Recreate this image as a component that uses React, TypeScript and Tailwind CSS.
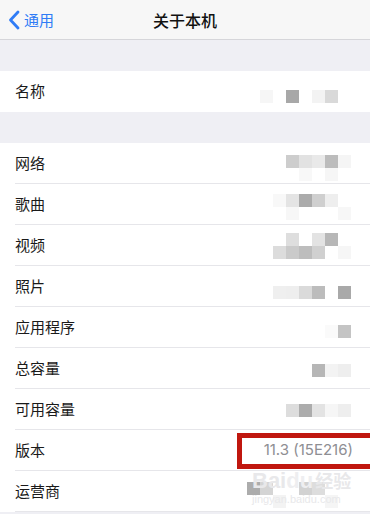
import React from "react";

type Block = { x: number; y: number; c: string };

// mosaic blur blocks over personal values (x relative to page, y relative to row top)
const rows: { label: string; blocks: Block[] }[] = [
  {
    label: "网络",
    blocks: [
      { x: 286, y: 12, c: "#cdcdcd" },
      { x: 299, y: 12, c: "#e2e2e2" },
      { x: 312, y: 12, c: "#e9e9e9" },
      { x: 325, y: 12, c: "#bcbcbc" },
      { x: 338, y: 12, c: "#f5f5f5" },
      { x: 299, y: 25, c: "#f8f8f8" },
      { x: 325, y: 25, c: "#f6f6f6" },
    ],
  },
  {
    label: "歌曲",
    blocks: [
      { x: 273, y: 10, c: "#f8f8f8" },
      { x: 286, y: 10, c: "#e4e4e4" },
      { x: 299, y: 10, c: "#ababab" },
      { x: 312, y: 10, c: "#cfcfcf" },
      { x: 325, y: 10, c: "#eeeeee" },
      { x: 286, y: 23, c: "#f7f7f7" },
      { x: 338, y: 23, c: "#f7f7f7" },
    ],
  },
  {
    label: "视频",
    blocks: [
      { x: 286, y: 8, c: "#dedede" },
      { x: 312, y: 8, c: "#e3e3e3" },
      { x: 325, y: 8, c: "#b7b7b7" },
      { x: 273, y: 21, c: "#dcdcdc" },
      { x: 286, y: 21, c: "#cacaca" },
      { x: 299, y: 21, c: "#bdbdbd" },
      { x: 312, y: 21, c: "#d0d0d0" },
      { x: 338, y: 21, c: "#f6f6f6" },
    ],
  },
  {
    label: "照片",
    blocks: [
      { x: 273, y: 20, c: "#efefef" },
      { x: 286, y: 20, c: "#eeeeee" },
      { x: 299, y: 20, c: "#dadada" },
      { x: 312, y: 20, c: "#bcbcbc" },
      { x: 338, y: 20, c: "#a9a9a9" },
    ],
  },
  {
    label: "应用程序",
    blocks: [
      { x: 325, y: 18, c: "#fafafa" },
      { x: 338, y: 18, c: "#c4c4c4" },
    ],
  },
  {
    label: "总容量",
    blocks: [
      { x: 312, y: 16, c: "#b6b6b6" },
      { x: 325, y: 16, c: "#f3f3f3" },
      { x: 338, y: 16, c: "#eeeeee" },
    ],
  },
  {
    label: "可用容量",
    blocks: [
      { x: 286, y: 15, c: "#dddddd" },
      { x: 299, y: 15, c: "#acacac" },
      { x: 312, y: 15, c: "#e3e3e3" },
      { x: 325, y: 15, c: "#f6f6f6" },
      { x: 338, y: 15, c: "#eeeeee" },
    ],
  },
  { label: "版本", blocks: [] },
  {
    label: "运营商",
    blocks: [
      { x: 247, y: 11, c: "#acacac" },
      { x: 260, y: 11, c: "#d4d4d4" },
      { x: 299, y: 11, c: "#d2d2d2" },
      { x: 312, y: 11, c: "#dddddd" },
      { x: 273, y: 24, c: "#f3f3f3" },
      { x: 325, y: 24, c: "#f5f5f5" },
    ],
  },
];

const nameBlocks: Block[] = [
  { x: 260, y: 19, c: "#f6f6f6" },
  { x: 286, y: 19, c: "#a8a8a8" },
  { x: 312, y: 19, c: "#f3f3f3" },
  { x: 325, y: 19, c: "#d9d9d9" },
];

const font = { fontFamily: '"Noto Sans CJK SC", "Noto Sans", sans-serif' };

function Mosaic({ blocks }: { blocks: Block[] }) {
  return (
    <>
      {blocks.map((b, i) => (
        <span
          key={i}
          className="absolute h-[13px] w-[13px]"
          style={{ left: b.x, top: b.y, background: b.c }}
        />
      ))}
    </>
  );
}

export default function App() {
  return (
    <div className="relative h-[514px] w-[370px] overflow-hidden bg-[#efeff4]" style={font}>
      {/* nav bar */}
      <div className="relative flex h-[40px] items-center border-b border-[#d6d6da] bg-[#f7f7f7]">
        <div className="flex items-center pl-[8px] text-[#2f7cf6]">
          <svg width="12" height="20" viewBox="0 0 12 20" fill="none">
            <path d="M10 2 L2.5 10 L10 18" stroke="currentColor" strokeWidth="2.8" strokeLinecap="round" strokeLinejoin="round" />
          </svg>
          <span className="ml-[4px] text-[15px] leading-none">通用</span>
        </div>
        <span className="absolute left-0 right-0 text-center text-[16px] font-medium leading-none text-[#111]">
          关于本机
        </span>
      </div>

      <div className="h-[31px]" />

      {/* name group */}
      <div className="relative flex h-[41px] items-center bg-white pl-[15px] text-[15px] text-[#1a1a1a]">
        名称
        <Mosaic blocks={nameBlocks} />
      </div>

      <div className="h-[31px]" />

      {/* info group */}
      <div className="bg-white">
        {rows.map((r) => (
          <div key={r.label} className="relative h-[41px] pl-[15px]">
            <div className="flex h-[40px] items-center justify-between pr-[17px] text-[15px] text-[#1a1a1a]">
              <span>{r.label}</span>
              {r.label === "版本" && (
                <span className="text-[15px] text-[#8e8e93]" style={{ fontFamily: "Inter, sans-serif" }}>
                  11.3 (15E216)
                </span>
              )}
            </div>
            <div className="h-px bg-[#e6e6ea]" />
            <Mosaic blocks={r.blocks} />
          </div>
        ))}
      </div>

      {/* red highlight box */}
      <div className="absolute left-[237px] top-[433px] h-[36px] w-[140px] border-[5px] border-[#c0170f]" />

      {/* watermark */}
      <div className="pointer-events-none absolute left-[252px] top-[470px] flex flex-col items-start leading-none text-[#e8e8ea]">
        <span className="text-[22px] font-bold" style={{ fontFamily: '"Liberation Sans", sans-serif' }}>
          Bai<span className="text-[#eeeef0]">du</span>
          <span className="ml-[2px] text-[18px]" style={font}>经验</span>
        </span>
        <span className="mt-[2px] text-[11px]" style={{ fontFamily: '"Liberation Sans", sans-serif' }}>
          jingyan.baidu.com
        </span>
      </div>
    </div>
  );
}
